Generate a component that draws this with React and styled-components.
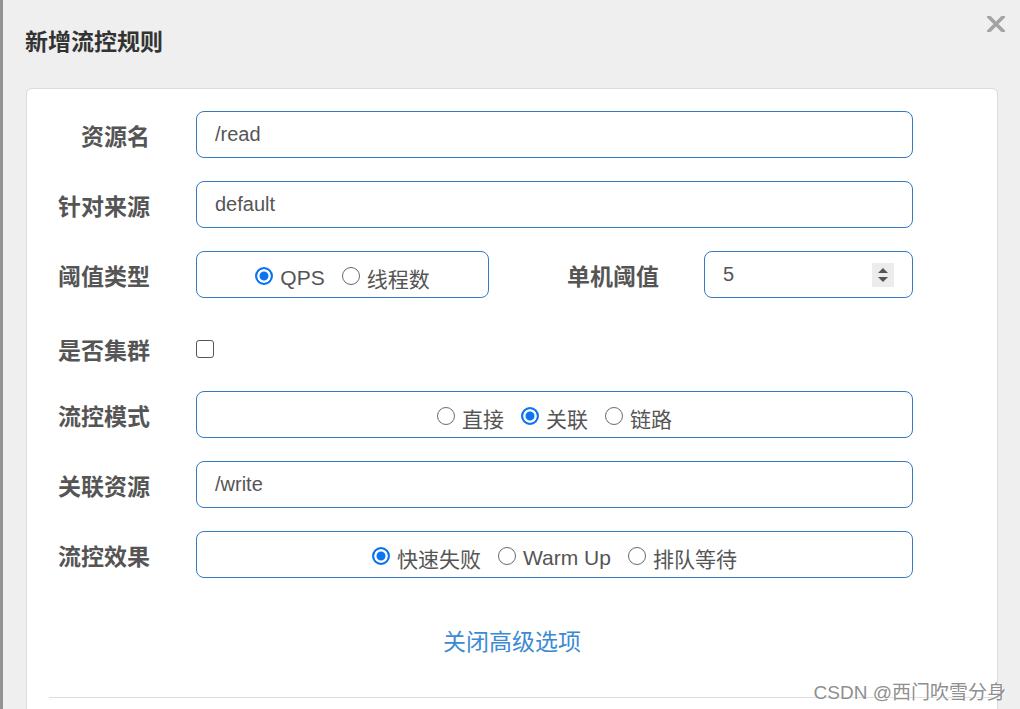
import React from 'react'
import styled, { createGlobalStyle } from 'styled-components'

const GlobalStyle = createGlobalStyle`
  html, body {
    margin: 0;
    padding: 0;
    height: 709px;
    overflow: hidden;
    background: #efefef;
  }
  body {
    font-family: "Liberation Sans", "Noto Sans CJK SC", sans-serif;
  }
`

const Radio = ({ checked, children }) => (
  <RadioItem>
    <RadioDot checked={checked} />
    <span>{children}</span>
  </RadioItem>
)

const App = () => (
  <Page>
    <GlobalStyle />
    <Backdrop />
    <Modal>
      <ModalHeader>
        <ModalTitle>新增流控规则</ModalTitle>
        <CloseButton>
          <svg width="18" height="16" viewBox="0 0 18 16">
            <path d="M2 1 L16 15 M16 1 L2 15" stroke="#a3a3a3" strokeWidth="3.6" strokeLinecap="square" />
          </svg>
        </CloseButton>
      </ModalHeader>
      <Panel>
        <FormRow>
          <Label>资源名</Label>
          <TextBox>/read</TextBox>
        </FormRow>
        <FormRow>
          <Label>针对来源</Label>
          <TextBox>default</TextBox>
        </FormRow>
        <FormRow>
          <Label>阈值类型</Label>
          <SplitCell>
            <RadioBox width={293}>
              <Radio checked>QPS</Radio>
              <Radio>线程数</Radio>
            </RadioBox>
            <SubLabel>单机阈值</SubLabel>
            <NumberBox>
              <span>5</span>
              <Spinner>
                <svg width="22" height="24" viewBox="0 0 22 24">
                  <path d="M6 10 L11 5 L16 10 Z" fill="#555" />
                  <path d="M6 14 L11 19 L16 14 Z" fill="#555" />
                </svg>
              </Spinner>
            </NumberBox>
          </SplitCell>
        </FormRow>
        <FormRow compact>
          <Label>是否集群</Label>
          <Checkbox />
        </FormRow>
        <FormRow>
          <Label>流控模式</Label>
          <RadioBox>
            <Radio>直接</Radio>
            <Radio checked>关联</Radio>
            <Radio>链路</Radio>
          </RadioBox>
        </FormRow>
        <FormRow>
          <Label>关联资源</Label>
          <TextBox>/write</TextBox>
        </FormRow>
        <FormRow>
          <Label>流控效果</Label>
          <RadioBox>
            <Radio checked>快速失败</Radio>
            <Radio>Warm Up</Radio>
            <Radio>排队等待</Radio>
          </RadioBox>
        </FormRow>
        <ToggleLink>关闭高级选项</ToggleLink>
        <Divider />
      </Panel>
    </Modal>
    <Watermark>CSDN @西门吹雪分身</Watermark>
  </Page>
)

export default App

const Page = styled.div`
  position: relative;
  display: flex;
  height: 709px;
  overflow: hidden;
  background: #efefef;
`
const Backdrop = styled.div`
  width: 3px;
  flex: none;
  background: #939393;
`
const Modal = styled.div`
  flex: 1;
  background: #efefef;
  border-top-left-radius: 6px;
  padding-left: 23px;
  padding-right: 22px;
`
const ModalHeader = styled.div`
  display: flex;
  justify-content: space-between;
  align-items: flex-start;
  height: 88px;
`
const ModalTitle = styled.div`
  margin-top: 24px;
  margin-left: -1px;
  font-size: 23px;
  line-height: 32px;
  font-weight: 700;
  color: #333;
  font-family: "Noto Sans CJK SC", sans-serif;
`
const CloseButton = styled.div`
  margin-top: 16px;
  margin-right: -7px;
  cursor: pointer;
`
const Panel = styled.div`
  background: #fff;
  border: 1px solid #dcdcdc;
  border-radius: 6px;
  padding-top: 22px;
  padding-bottom: 60px;
  display: flex;
  flex-direction: column;
  gap: 23px;
`
const FormRow = styled.div`
  display: grid;
  grid-template-columns: 123px 717px;
  column-gap: 46px;
  align-items: center;
  height: 47px;
  box-sizing: border-box;
  padding-top: ${({ compact }) => (compact ? '8px' : 0)};
`
const Label = styled.div`
  text-align: right;
  font-family: "Noto Sans CJK SC", sans-serif;
  font-size: 23px;
  font-weight: 700;
  color: #555;
  line-height: 30px;
`
const TextBox = styled.div`
  height: 47px;
  box-sizing: border-box;
  border: 1px solid #3479c1;
  border-radius: 8px;
  padding-left: 18px;
  display: flex;
  align-items: center;
  font-size: 20px;
  color: #555;
`
const SplitCell = styled.div`
  display: flex;
  align-items: center;
`
const RadioBox = styled.div`
  height: 47px;
  width: ${({ width }) => (width ? `${width}px` : '100%')};
  box-sizing: border-box;
  border: 1px solid #3479c1;
  border-radius: 8px;
  display: flex;
  justify-content: center;
  align-items: center;
  gap: 17px;
  padding-top: 6px;
  font-size: 21px;
  color: #555;
`
const RadioItem = styled.label`
  display: flex;
  align-items: center;
  gap: 7px;
  font-family: "Liberation Sans", "Noto Sans CJK SC", sans-serif;
`
const RadioDot = styled.span`
  width: 18px;
  height: 18px;
  margin-top: -3px;
  box-sizing: border-box;
  border-radius: 50%;
  border: ${({ checked }) => (checked ? '2px solid #0b74ee' : '1.5px solid #6a6a6a')};
  background: ${({ checked }) => (checked ? '#0b74ee' : '#fff')};
  box-shadow: ${({ checked }) => (checked ? 'inset 0 0 0 2.5px #fff' : 'none')};
`
const SubLabel = styled(Label)`
  width: 170px;
  margin-right: 45px;
  flex: none;
`
const NumberBox = styled(TextBox)`
  flex: 1;
  justify-content: space-between;
  padding-right: 18px;
`
const Spinner = styled.div`
  width: 22px;
  height: 24px;
  background: #ececec;
  display: flex;
`
const Checkbox = styled.span`
  width: 18px;
  height: 18px;
  box-sizing: border-box;
  border: 1.5px solid #555;
  border-radius: 3px;
  background: #fff;
`
const ToggleLink = styled.div`
  margin-top: 24px;
  text-align: center;
  font-family: "Noto Sans CJK SC", sans-serif;
  font-size: 23px;
  line-height: 30px;
  color: #3d8ad4;
  cursor: pointer;
`
const Divider = styled.div`
  margin-top: 19px;
  margin-left: 22px;
  height: 1px;
  background: #dedede;
`
const Watermark = styled.div`
  position: absolute;
  right: 14px;
  top: 677px;
  font-size: 19px;
  color: #8f8f8f;
  text-shadow: 0 0 2px #fff, 0 0 2px #fff;
  font-family: "Liberation Sans", "Noto Sans CJK SC", sans-serif;
`
